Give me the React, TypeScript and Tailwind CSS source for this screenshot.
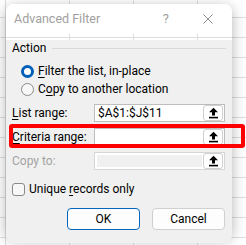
import React from "react";

function UploadIcon({ color = "#000" }: { color?: string }) {
  return (
    <svg width="11" height="12" viewBox="0 0 11 12">
      <path d="M5.5 0.8 L10 5.3 H7 V8.6 H4 V5.3 H1 Z" fill={color} />
      <rect x="1" y="9.8" width="9" height="1.6" fill={color} />
    </svg>
  );
}

function RangeInput({ value, disabled }: { value?: string; disabled?: boolean }) {
  return (
    <div className={`flex h-[18px] w-[131px] items-center border bg-white ${disabled ? "border-[#d6d6d6]" : "border-[#bdbdbd]"}`}>
      {disabled ? (
        <div className="ml-[2px] h-[12px] flex-1 bg-[#f0f0f0]" />
      ) : (
        <div className="flex-1 pl-[3px] text-[12px] leading-none text-black">{value}</div>
      )}
      <div className="mx-[1px] flex h-[16px] w-[20px] items-center justify-center rounded-[3px] border border-[#cfcfcf] bg-white">
        <UploadIcon />
      </div>
    </div>
  );
}

function FieldRow({ label, children, dim }: { label: React.ReactNode; children: React.ReactNode; dim?: boolean }) {
  return (
    <div className="mt-[6px] flex h-[18px] items-center">
      <div className={`w-[82px] text-[12px] ${dim ? "text-[#a3a3a3]" : "text-black"}`}>{label}</div>
      {children}
    </div>
  );
}

export default function App() {
  return (
    <div className="relative h-[245px] w-[246px] overflow-hidden bg-white bg-[linear-gradient(to_right,#dedede_1px,transparent_1px),linear-gradient(to_bottom,#dedede_1px,transparent_1px)] bg-[length:64px_20px] bg-[position:5px_17px] pl-[6px] pt-[4px] font-['Roboto',sans-serif]">
      <div className="h-[233px] w-[226px] rounded-[8px] shadow-[0_3px_14px_rgba(0,0,0,0.3)]">
        <div className="flex h-[30px] items-center rounded-t-[8px] bg-white pl-[8px]">
          <span className="flex-1 text-[12.5px] text-[#a0a0a0]">Advanced Filter</span>
          <span className="mr-[34px] text-[13px] text-[#a0a0a0]">?</span>
          <svg width="10" height="10" viewBox="0 0 10 10" className="mr-[19px]">
            <path d="M0.5 0.5 L9.5 9.5 M9.5 0.5 L0.5 9.5" stroke="#8f8f8f" strokeWidth="1" />
          </svg>
        </div>
        <div className="h-[203px] rounded-b-[8px] bg-[#f0f0f0] px-[6px] text-[12px] text-black">
          <div className="mt-[6px] flex h-[16px] items-center">
            <span>Action</span>
            <div className="ml-[6px] h-px flex-1 bg-[#d9d9d9]" />
          </div>
          <div className="mt-[6px] flex h-[18px] items-center pl-[9px]">
            <div className="flex h-[13px] w-[13px] items-center justify-center rounded-full bg-[#005fb8]">
              <div className="h-[7px] w-[7px] rounded-full bg-white" />
            </div>
            <span className="ml-[4px]">
              <u className="underline-offset-2">F</u>ilter the list, in-place
            </span>
          </div>
          <div className="flex h-[18px] items-center pl-[9px]">
            <div className="h-[13px] w-[13px] rounded-full border border-[#8a8a8a] bg-[#f7f7f7]" />
            <span className="ml-[4px]">
              C<u className="underline-offset-2">o</u>py to another location
            </span>
          </div>
          <FieldRow label={<><u className="underline-offset-2">L</u>ist range:</>}>
            <RangeInput value="$A$1:$J$11" />
          </FieldRow>
          <FieldRow label={<><u className="underline-offset-2">C</u>riteria range:</>}>
            <RangeInput value="" />
          </FieldRow>
          <FieldRow label="Copy to:" dim>
            <RangeInput disabled />
          </FieldRow>
          <div className="mt-[10px] flex h-[18px] items-center">
            <div className="h-[13px] w-[13px] rounded-[3px] border border-[#8a8a8a] bg-[#f7f7f7]" />
            <span className="ml-[4px]">
              Unique <u className="underline-offset-2">r</u>ecords only
            </span>
          </div>
          <div className="mt-[10px] flex justify-end gap-[12px] pr-[1px]">
            <button className="h-[22px] w-[73px] rounded-[4px] border border-[#0067c0] bg-[#fdfdfd] text-[12px] text-black">OK</button>
            <button className="h-[22px] w-[73px] rounded-[4px] border border-[#d0d0d0] bg-[#fdfdfd] text-[12px] text-black">Cancel</button>
          </div>
        </div>
      </div>
      <div className="absolute left-[9px] top-[124px] h-[24px] w-[236px] rounded-[3px] border-[4px] border-[#ff0000]" />
    </div>
  );
}
